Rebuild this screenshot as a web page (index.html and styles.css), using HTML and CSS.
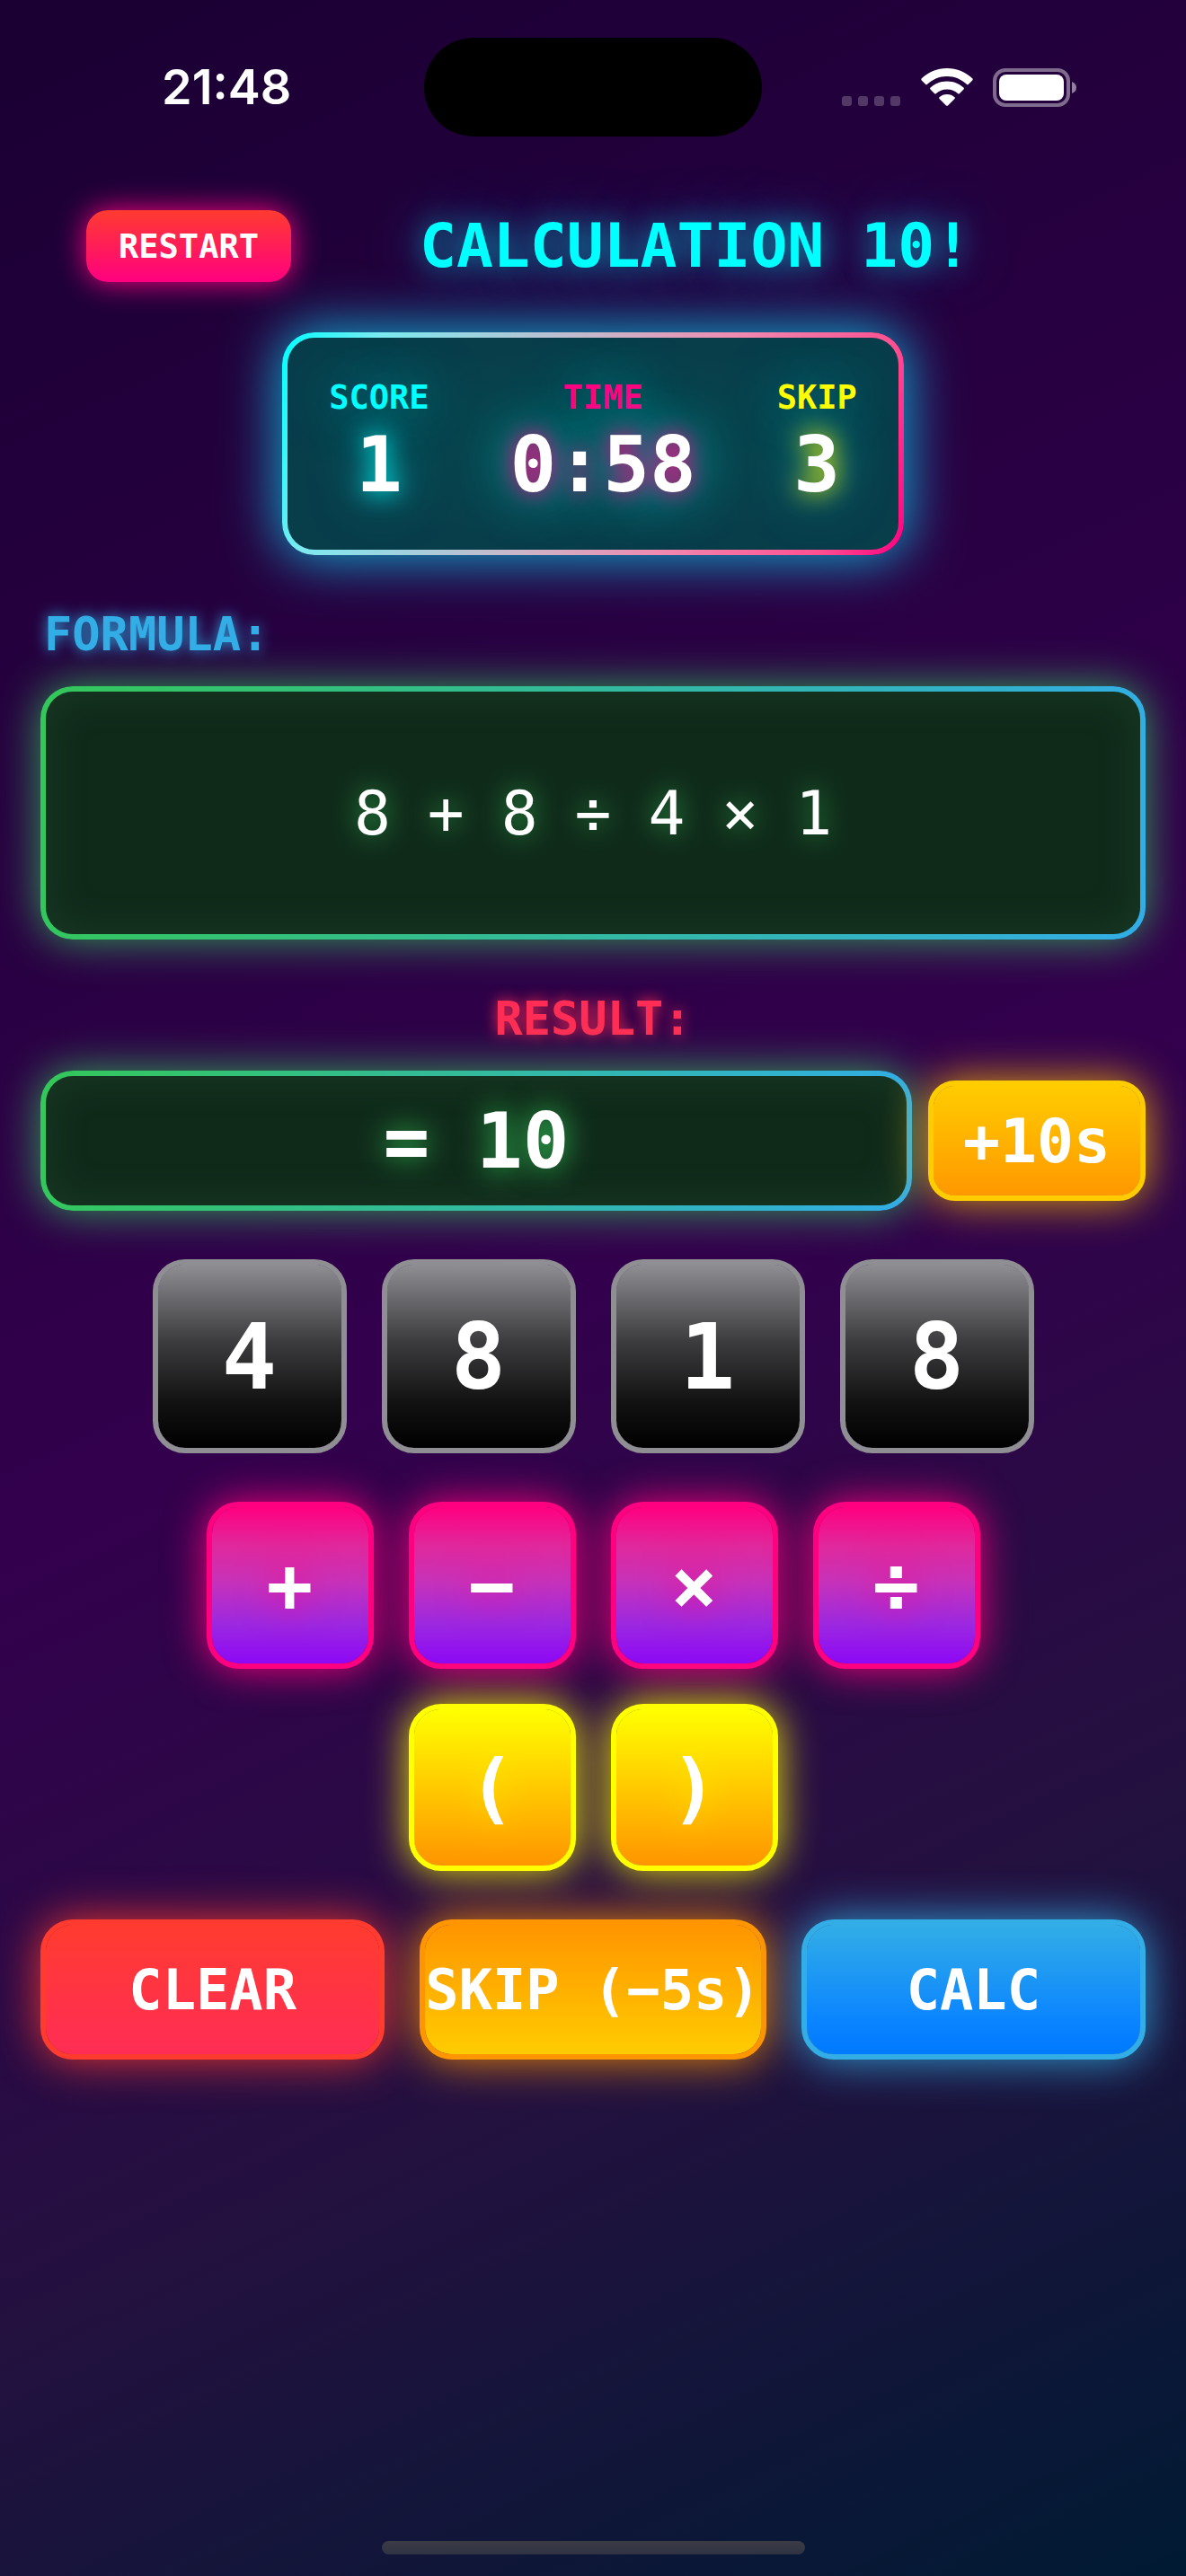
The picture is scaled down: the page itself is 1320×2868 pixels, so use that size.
FILE: index.html
```html
<!DOCTYPE html>
<html lang="en">
<head>
<meta charset="utf-8">
<meta name="viewport" content="width=device-width, initial-scale=1">
<title>Calculation 10!</title>
<link rel="stylesheet" href="styles.css">
</head>
<body>
<div class="screen">
  <div class="status">
    <span class="clock">21:48</span>
    <span class="island"></span>
    <span class="indicators">
      <svg class="dots" width="66" height="12" viewBox="0 0 66 12" aria-hidden="true"><g fill="#fff" opacity=".22"><rect width="11" height="11" rx="3"/><rect x="18" width="11" height="11" rx="3"/><rect x="36" width="11" height="11" rx="3"/><rect x="54" width="11" height="11" rx="3"/></g></svg>
      <svg class="wifi" width="58" height="42" viewBox="0 0 58 42" aria-hidden="true"><g fill="#fff"><path d="M29 0C18 0 8 4.300 .5 11.500Q0 12.500.7 13.400L5.300 18Q6 18.500 6.800 18C13 12.300 20.500 9 29 9S45 12.300 51.200 18Q52 18.500 52.700 18L57.300 13.400Q58 12.500 57.500 11.500C50 4.300 40 0 29 0Z"/><path d="M29 14.500C21.600 14.500 15.200 17.300 10.300 21.800Q9.900 22.700 10.500 23.500L15.200 28.200Q16 28.700 16.700 28.200C20 25.200 24.200 23.500 29 23.500S38 25.200 41.300 28.200Q42 28.700 42.800 28.200L47.500 23.500Q48.100 22.700 47.700 21.800C42.800 17.300 36.400 14.500 29 14.500Z"/><path d="M29 29C25.600 29 22.700 30.200 20.400 32.300Q19.900 33.200 20.500 33.900L28 41.400Q29 42.200 30 41.400L37.500 33.900Q38.100 33.200 37.600 32.300C35.300 30.200 32.400 29 29 29Z"/></g></svg>
      <svg class="battery" width="94" height="43" viewBox="0 0 94 43" aria-hidden="true"><rect x="2" y="2" width="82" height="39" rx="12" fill="none" stroke="#fff" stroke-width="4" opacity=".42"/><rect x="7" y="7" width="72" height="29" rx="8" fill="#fff"/><path d="M88 15Q93 17 93 21.500T88 28Z" fill="#fff" opacity=".5"/></svg>
    </span>
  </div>

  <header class="header">
    <button class="restart" type="button">RESTART</button>
    <h1 class="title">CALCULATION 10!</h1>
  </header>

  <main class="game">
    <dl class="board">
      <div class="stat stat-score"><dt>SCORE</dt><dd>1</dd></div>
      <div class="stat stat-time"><dt>TIME</dt><dd>0:58</dd></div>
      <div class="stat stat-skip"><dt>SKIP</dt><dd>3</dd></div>
    </dl>

    <h2 class="label label-formula">FORMULA:</h2>
    <div class="display formula">8 + 8 ÷ 4 × 1</div>

    <h2 class="label label-result">RESULT:</h2>
    <div class="result-row">
      <output class="display result">= 10</output>
      <button class="key bonus" type="button">+10s</button>
    </div>

    <div class="keys numbers">
      <button class="key number" type="button">4</button>
      <button class="key number" type="button">8</button>
      <button class="key number" type="button">1</button>
      <button class="key number" type="button">8</button>
    </div>
    <div class="keys operators">
      <button class="key operator" type="button">+</button>
      <button class="key operator" type="button">−</button>
      <button class="key operator" type="button">×</button>
      <button class="key operator" type="button">÷</button>
    </div>
    <div class="keys parens">
      <button class="key operator paren" type="button">(</button>
      <button class="key operator paren" type="button">)</button>
    </div>
    <div class="actions">
      <button class="key action clear" type="button">CLEAR</button>
      <button class="key action skip" type="button">SKIP (−5s)</button>
      <button class="key action calc" type="button">CALC</button>
    </div>
  </main>

  <div class="home-bar"></div>
</div>
</body>
</html>
```

FILE: styles.css
```css
* { box-sizing: border-box; }

body { margin: 0; }

.screen {
  display: flex;
  flex-direction: column;
  min-height: 100vh;
  padding-bottom: 24px;
  overflow: hidden;
  color: #fff;
  font-family: "DejaVu Sans Mono", "Liberation Mono", monospace;
  background: linear-gradient(155deg, #1a0033, #33004d 50%, #23113f 75%, #001a33);
}

button { font-family: inherit; color: inherit; cursor: pointer; }

/* Status bar */
.status {
  display: grid;
  grid-template-columns: 1fr 376px 1fr;
  align-items: center;
  height: 194px;
}
.clock {
  padding-left: 180px;
  font: 600 54px/64px Inter, sans-serif;
}
.island { height: 110px; border-radius: 55px; background: #000; }
.indicators {
  display: flex;
  align-items: center;
  justify-content: flex-end;
  padding-right: 121px;
}
.dots { align-self: flex-end; margin-right: 22px; }
.wifi { margin-right: 22px; }

/* Header */
.header {
  display: flex;
  align-items: center;
  justify-content: space-between;
  margin-top: 40px;
  padding: 0 96px;
}
.header::after { content: ""; }
.restart {
  width: 228px;
  height: 80px;
  padding: 0;
  border: 0;
  border-radius: 24px;
  font-size: 37px;
  font-weight: 700;
  background: linear-gradient(#ff3b30, #ff0080);
  box-shadow: 0 0 32px #ff0080;
}
.title {
  margin: 0;
  font-size: 68px;
  line-height: 80px;
  color: #0ff;
  text-shadow: 0 0 30px rgba(0, 255, 255, .5), 0 0 60px rgba(0, 200, 255, .5);
}

.game { padding: 0 45px; }

/* Score board */
.board {
  display: flex;
  justify-content: center;
  gap: 90px;
  width: fit-content;
  margin: 56px auto 58px;
  padding: 45px 46px 47px;
  border: 6px solid transparent;
  border-radius: 36px;
  background:
    radial-gradient(closest-side, #06484f, #083d4a) padding-box,
    linear-gradient(110deg, #0ff, #7deaf0 14%, #cdb4c8 46%, #f08ab0 65%, #ff4f90 88%, #ff0080) border-box;
  box-shadow: 0 0 60px 4px rgba(16, 190, 225, .9);
}
.stat { text-align: center; }
.stat dt {
  font-size: 37px;
  font-weight: 700;
  line-height: 44px;
  text-shadow: 0 0 60px rgba(0, 255, 255, .6);
}
.stat dd {
  margin: 4px 0 0;
  font-size: 86px;
  font-weight: 700;
  line-height: 96px;
}
.stat-score dt { color: #0ff; }
.stat-time dt { color: #ff0080; }
.stat-skip dt { color: #ff0; }
.stat-score dd { text-shadow: 0 0 28px #0ff, 0 0 60px rgba(0, 255, 255, .6); }
.stat-time dd { text-shadow: 0 0 24px #ff0080, 0 0 60px rgba(0, 255, 255, .9); }
.stat-skip dd { text-shadow: 0 0 28px #ff0, 0 0 60px rgba(0, 255, 255, .7); }

/* Displays */
.label { margin: 0; font-size: 52px; line-height: 60px; }
.label-formula { padding-left: 4px; color: #32ade6; text-shadow: 0 0 16px #32ade6; }
.label-result { margin-top: 58px; text-align: center; color: #ff2d55; text-shadow: 0 0 16px #ff2d55; }
.display {
  display: flex;
  align-items: center;
  justify-content: center;
  border: 6px solid transparent;
  border-radius: 36px;
  background:
    linear-gradient(#102a1a, #102a1a) padding-box,
    linear-gradient(100deg, #34c759, #32ade6) border-box;
  box-shadow: 0 0 48px rgba(52, 199, 89, .8), inset 0 0 45px rgba(52, 100, 70, .28);
}
.formula {
  height: 282px;
  margin-top: 28px;
  font-size: 68px;
  white-space: pre;
  text-shadow: 0 0 30px rgba(52, 199, 89, .8);
}
.result-row {
  display: flex;
  align-items: center;
  gap: 18px;
  margin-top: 28px;
}
.result {
  flex: 1;
  height: 156px;
  font-size: 86px;
  font-weight: 700;
  white-space: pre;
  text-shadow: 0 0 32px #34c759;
}

/* Keys */
.key {
  padding: 0;
  border: 6px solid;
  border-radius: 36px;
  font-weight: 700;
  white-space: nowrap;
}
.bonus {
  width: 242px;
  height: 134px;
  border-color: #fc0;
  border-radius: 30px;
  font-size: 68px;
  background: #fc0 linear-gradient(#fc0, #ff9800) padding-box;
  box-shadow: 0 0 48px rgba(255, 190, 0, .85);
}
.keys {
  display: flex;
  justify-content: center;
  gap: 39px;
  margin-top: 54px;
}
.number {
  width: 216px;
  height: 216px;
  border-color: #8e8e93;
  font-size: 102px;
  background: #8e8e93 linear-gradient(#8e8e93, #3c3c3e 42%, #121213 75%, #000) padding-box;
}
.operator {
  width: 186px;
  height: 186px;
  border-color: #ff0080;
  font-size: 86px;
  background: #ff0080 linear-gradient(#ff0080, #e0289c 25%, #c632ba 48%, #9c28e0 75%, #8c08f5) padding-box;
  box-shadow: 0 0 45px rgba(255, 0, 128, .95);
  text-shadow: 0 0 40px rgba(255, 0, 128, .75);
}
.parens { margin-top: 39px; }
.paren {
  border-color: #ff0;
  background: #ff0 linear-gradient(#ff0, #ff9500) padding-box;
  box-shadow: 0 0 45px rgba(255, 255, 0, .9);
  text-shadow: 0 0 40px rgba(255, 255, 0, .6);
}
.actions {
  display: grid;
  grid-template-columns: repeat(3, 1fr);
  gap: 39px;
  margin-top: 54px;
}
.action { height: 156px; font-size: 62px; }
.clear {
  border-color: #ff3b30;
  background: #ff3b30 linear-gradient(#ff3b30, #ff2d55) padding-box;
  box-shadow: 0 0 50px rgba(255, 59, 48, .9);
}
.skip {
  border-color: #ff9500;
  background: #ff9500 linear-gradient(#ff9500, #fc0) padding-box;
  box-shadow: 0 0 50px rgba(255, 149, 0, .9);
}
.calc {
  border-color: #32ade6;
  background: #32ade6 linear-gradient(#32ade6, #0a84ff 75%, #007aff) padding-box;
  box-shadow: 0 0 50px rgba(50, 173, 230, .9);
}

.home-bar {
  width: 471px;
  height: 15px;
  margin: auto auto 0;
  border-radius: 8px;
  background: linear-gradient(#3b3b46, #2f3342);
}
```
